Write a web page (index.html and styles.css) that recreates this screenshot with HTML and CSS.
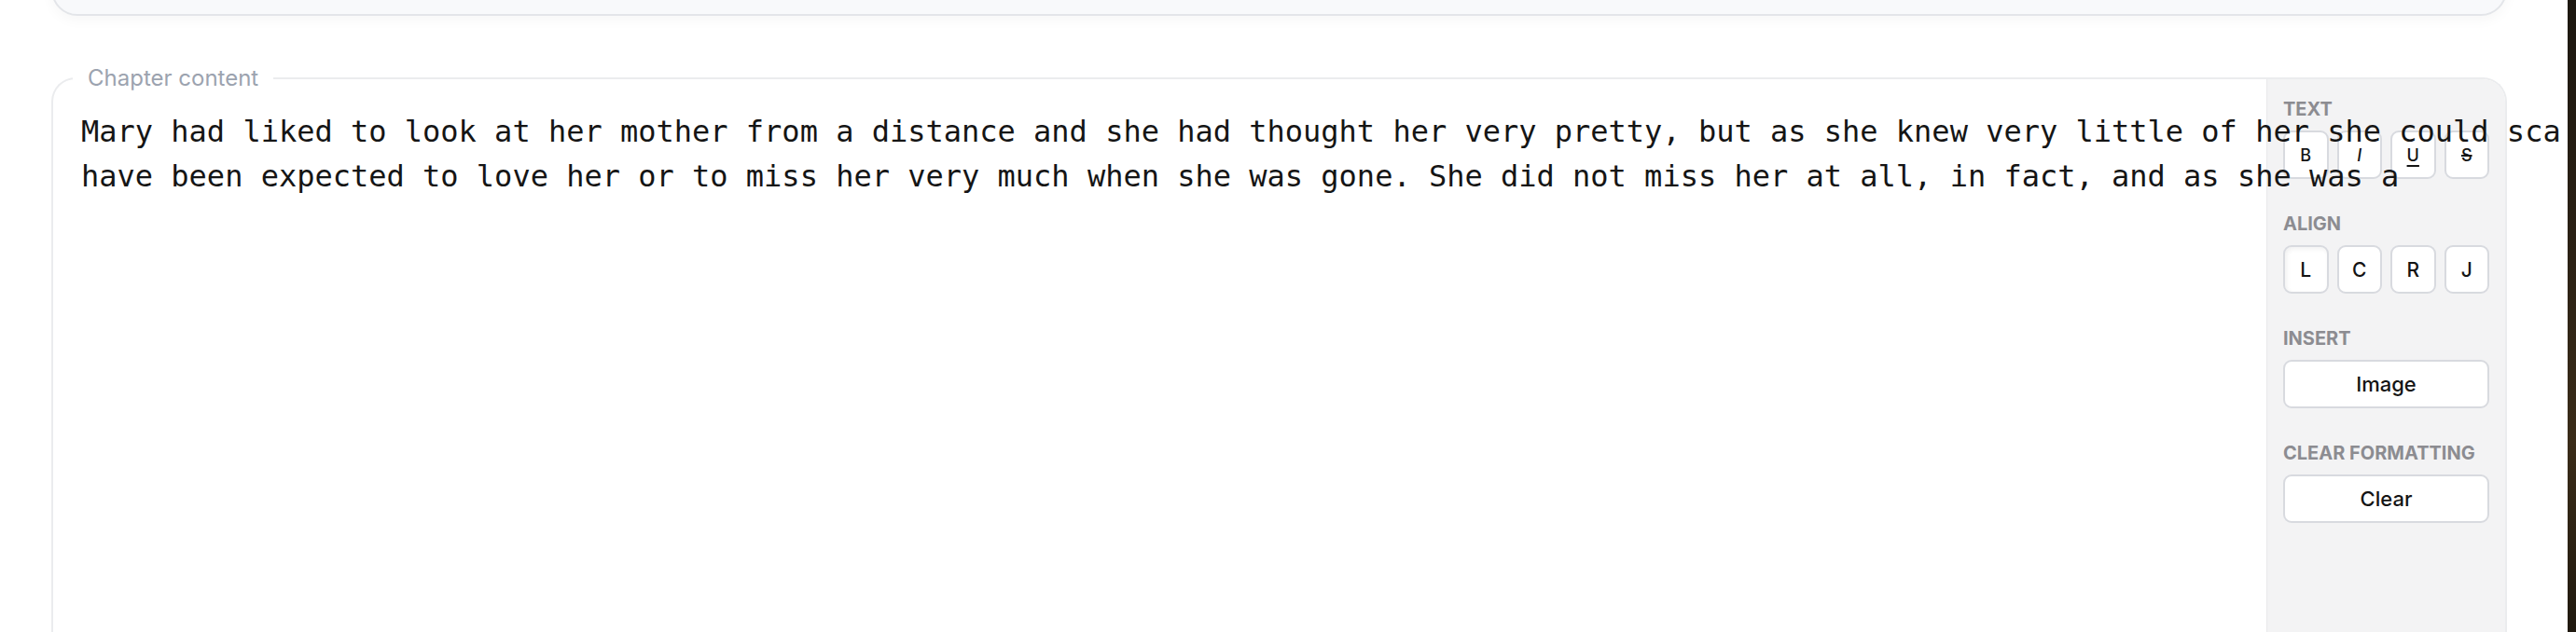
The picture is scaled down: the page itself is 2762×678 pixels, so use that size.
FILE: index.html
```html
<!DOCTYPE html>
<html lang="en">
<head>
<meta charset="utf-8">
<title>Chapter editor</title>
<link rel="stylesheet" href="styles.css">
</head>
<body>
<div class="app">
  <main class="main">
    <div class="top-card"></div>
    <section class="chapter">
      <span class="chapter-label">Chapter content</span>
      <div class="editor">Mary had liked to look at her mother from a distance and she had thought her very pretty, but as she knew very little of her she could sca<br>have been expected to love her or to miss her very much when she was gone. She did not miss her at all, in fact, and as she was a</div>
      <aside class="toolbar">
        <div class="tool-group">
          <div class="tool-label">TEXT</div>
          <div class="tool-row">
            <button class="tool-btn small">B</button>
            <button class="tool-btn small"><i>I</i></button>
            <button class="tool-btn small"><u>U</u></button>
            <button class="tool-btn small"><s>S</s></button>
          </div>
        </div>
        <div class="tool-group">
          <div class="tool-label">ALIGN</div>
          <div class="tool-row">
            <button class="tool-btn active">L</button>
            <button class="tool-btn">C</button>
            <button class="tool-btn">R</button>
            <button class="tool-btn">J</button>
          </div>
        </div>
        <div class="tool-group">
          <div class="tool-label">INSERT</div>
          <button class="tool-btn wide">Image</button>
        </div>
        <div class="tool-group">
          <div class="tool-label">CLEAR FORMATTING</div>
          <button class="tool-btn wide">Clear</button>
        </div>
      </aside>
    </section>
  </main>
  <div class="edge"></div>
</div>
</body>
</html>
```

FILE: styles.css
```css
html, body {
  margin: 0;
  padding: 0;
  overflow: hidden;
  background: #ffffff;
}

.app {
  display: flex;
  height: 678px;
  overflow: hidden;
}

.main {
  width: 2753px;
  flex: none;
  padding-left: 55px;
  box-sizing: border-box;
  background: #ffffff;
  position: relative;
  z-index: 1;
}

.edge {
  flex: 1;
  background: linear-gradient(180deg, #1c1710 0%, #2b2115 40%, #3a2c19 70%, #20190f 100%);
}

.top-card {
  width: 2633px;
  height: 100px;
  margin-top: -83px;
  box-sizing: border-box;
  background: #f8f9fb;
  border: 2px solid #e3e5e9;
  border-radius: 28px;
  box-shadow: 0 5px 14px rgba(0, 0, 0, 0.035);
}

.chapter {
  position: relative;
  margin-top: 66px;
  width: 2633px;
  height: 700px;
  box-sizing: border-box;
  border: 2px solid #ebecee;
  border-bottom: none;
  border-radius: 26px 26px 0 0;
  display: grid;
  grid-template-columns: minmax(0, 1fr) 256px;
}

.chapter-label {
  position: absolute;
  left: 21px;
  top: -16px;
  padding: 0 16px;
  background: #ffffff;
  font-family: Inter, "Liberation Sans", sans-serif;
  font-size: 24px;
  line-height: 29px;
  color: #9ca3af;
}

.editor {
  position: relative;
  z-index: 1;
  min-width: 0;
  padding: 32px 0 0 30px;
  white-space: pre;
  font-family: "DejaVu Sans Mono", "Liberation Mono", monospace;
  font-size: 32px;
  line-height: 48px;
  color: #151515;
}

.toolbar {
  background: #f3f3f4;
  border-left: 1px solid #e9e9eb;
  border-top-right-radius: 24px;
  padding: 20px 17px 0 17px;
  display: flex;
  flex-direction: column;
  gap: 36px;
}

.tool-group {
  display: flex;
  flex-direction: column;
  gap: 11px;
}

.tool-label {
  font-family: Inter, "Liberation Sans", sans-serif;
  font-size: 20px;
  line-height: 24px;
  font-weight: 700;
  color: #8c8c91;
}

.tool-row {
  display: grid;
  grid-template-columns: repeat(4, 1fr);
  gap: 9px;
}

.tool-btn {
  height: 52px;
  margin: 0;
  padding: 0;
  box-sizing: border-box;
  background: #ffffff;
  border: 2px solid #d8dadf;
  border-radius: 9px;
  font-family: Inter, "Liberation Sans", sans-serif;
  font-size: 21px;
  font-weight: 500;
  color: #141414;
}

.tool-btn.small {
  font-size: 18px;
}

.tool-btn.active {
  box-shadow: inset 2px 2px 5px rgba(0, 0, 0, 0.06);
}

.tool-btn.wide {
  width: 100%;
  font-size: 22px;
}

.tool-btn u {
  text-decoration-thickness: 2px;
  text-underline-offset: 4px;
}

.tool-btn s {
  text-decoration-thickness: 2px;
}
```
